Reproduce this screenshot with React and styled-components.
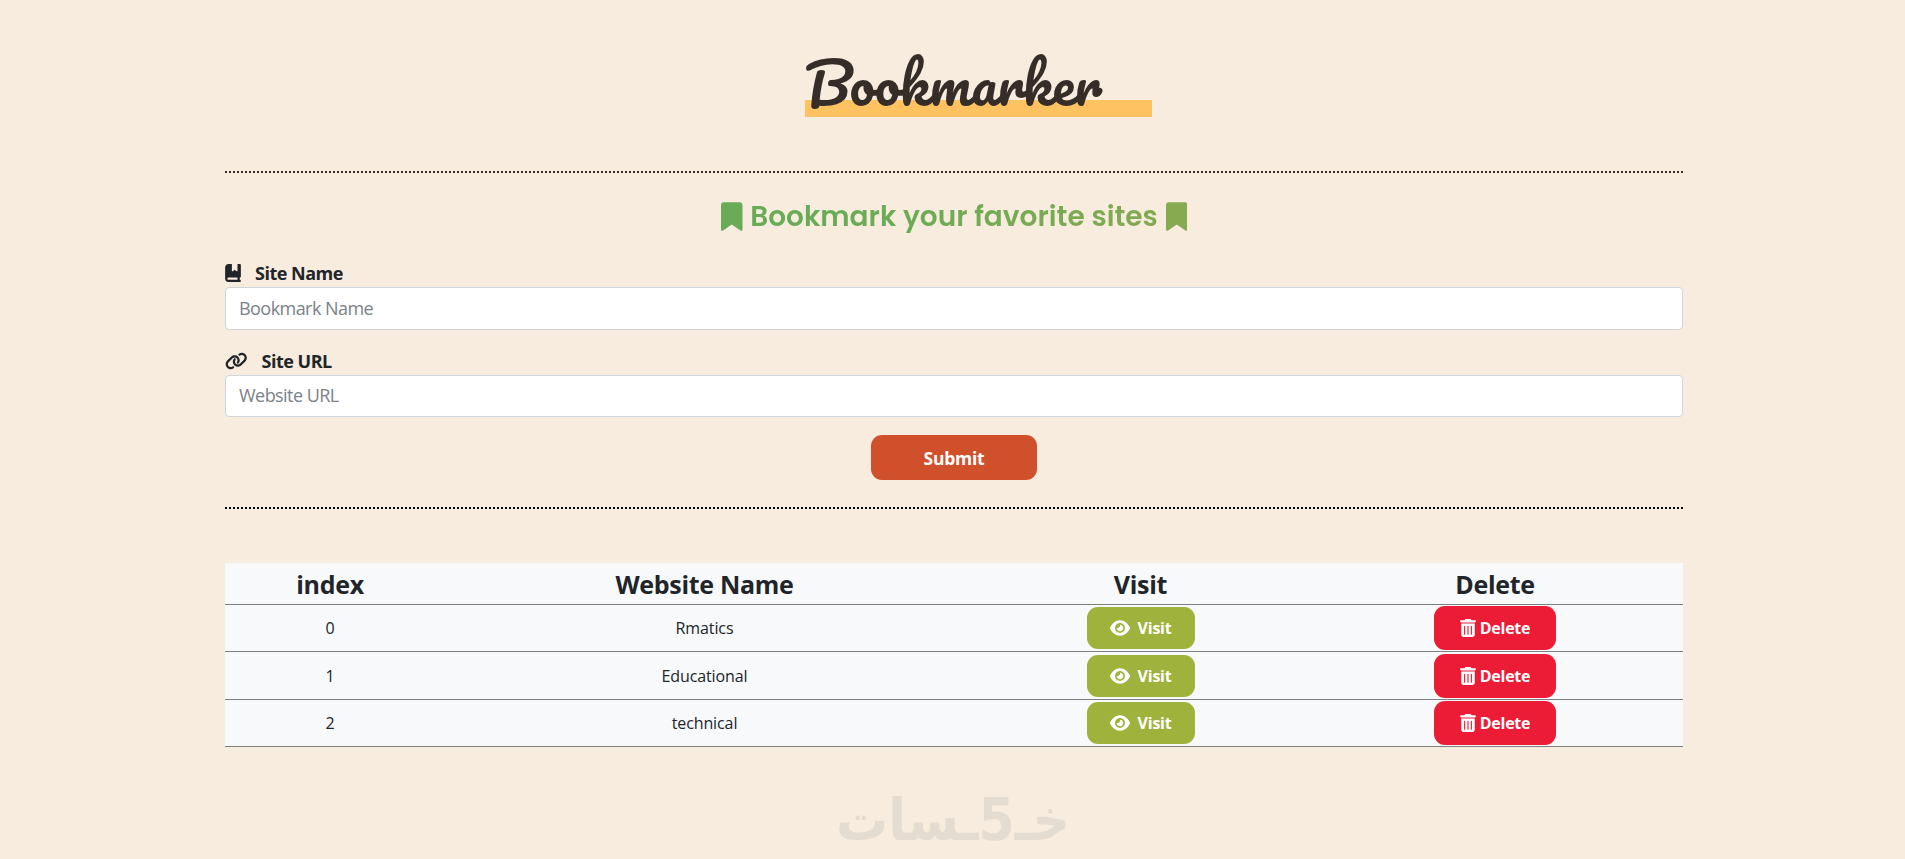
import styled, { createGlobalStyle } from "styled-components";
import {
  FaBookBookmark,
  FaBookmark,
  FaEye,
  FaLink,
  FaTrashCan,
} from "react-icons/fa6";

const GlobalStyle = createGlobalStyle`
  * {
    box-sizing: border-box;
  }
  body {
    margin: 0;
    height: 859px;
    overflow: hidden;
    background: #f8ecde;
    color: #212529;
    font-family: "Segoe UI", "Open Sans", "Noto Sans", sans-serif;
    font-size: 18px;
  }
`;

const Container = styled.main`
  width: 1458px;
  margin-left: 225px;
  display: flex;
  flex-direction: column;
  align-items: center;
`;

const Title = styled.h1`
  width: 347px;
  height: 71px;
  margin: 46px 0 54px 49px;
  background: linear-gradient(#ffc261, #ffc261) 0 54px / 100% 17px no-repeat;
  color: #362d29;
  font-family: Pacifico, cursive;
  font-size: 56px;
  font-weight: 400;
  line-height: 73px;
  white-space: nowrap;
`;

const Divider = styled.div`
  width: 100%;
  margin-top: ${(props) => props.$top || "0"};
  border-top: 2px dotted ${(props) => props.$color};
`;

const Icon = styled.span`
  flex-shrink: 0;
  color: ${(props) => props.$color || "inherit"};
  svg {
    display: block;
    width: ${(props) => props.$width};
    height: ${(props) => props.$height || "18px"};
  }
`;

const Heading = styled.h2`
  display: flex;
  align-items: center;
  justify-content: space-between;
  width: 466px;
  height: 42px;
  margin: 22px 0 23px;
  font-family: Poppins, Inter, sans-serif;
  font-size: 28px;
  font-weight: 600;
  white-space: nowrap;
`;

const HeadingText = styled.span`
  padding-top: 1px;
  background: linear-gradient(90deg, #69ab56 30%, #82aa51);
  background-clip: text;
  color: transparent;
`;

const Form = styled.form`
  width: 100%;
  display: flex;
  flex-direction: column;
  align-items: center;
`;

const Field = styled.label`
  width: 100%;
  margin-bottom: 18px;
  font-weight: 700;
`;

const FieldName = styled.div`
  display: flex;
  align-items: center;
  gap: 14px;
  height: 27px;
  padding-bottom: 1px;
  letter-spacing: -0.5px;
`;

const Input = styled.input`
  display: block;
  width: 100%;
  height: 42.5px;
  padding: 0 13px 1px;
  border: 1px solid #ced4da;
  border-radius: 4px;
  background: #fff;
  font: inherit;
  font-weight: 400;
  letter-spacing: -0.55px;
  &::placeholder {
    color: #7a8288;
    opacity: 1;
  }
`;

const Button = styled.button`
  display: inline-flex;
  align-items: center;
  justify-content: center;
  gap: ${(props) => props.$gap || "0"};
  width: ${(props) => props.$width};
  height: ${(props) => props.$height};
  padding: 0;
  border: 0;
  border-radius: 11px;
  background: ${(props) => props.$color};
  color: #fff;
  font-family: inherit;
  font-size: ${(props) => props.$size || "16px"};
  font-weight: 700;
  letter-spacing: -0.25px;
`;

const Table = styled.section`
  width: 100%;
  margin-top: 54px;
  background: #f8f9fb;
`;

const Row = styled.div`
  display: grid;
  grid-template-columns: 210px 539px 333px 376px;
  align-items: center;
  justify-items: center;
  height: ${(props) => props.$height};
  border-bottom: 1px solid #7d7f82;
  font-size: 16px;
  letter-spacing: -0.1px;
`;

const HeadRow = styled(Row)`
  padding-top: 1px;
  font-size: 25px;
  font-weight: 700;
  letter-spacing: -0.3px;
`;

const Watermark = styled.svg`
  display: block;
  margin: 38px 0 0 -2px;
  overflow: visible;
  fill: #e4dcd1;
  font-family: "DejaVu Sans", sans-serif;
  font-size: 58px;
  font-weight: 700;
`;

const sites = [
  { name: "Rmatics", height: "47px" },
  { name: "Educational", height: "48px" },
  { name: "technical", height: "47px" },
];

const SiteRow = ({ index, name, height }) => (
  <Row $height={height}>
    <span>{index}</span>
    <span>{name}</span>
    <Button $color="#9fb23b" $width="108px" $height="42px" $gap="8px">
      <Icon $width="20px">
        <FaEye />
      </Icon>
      Visit
    </Button>
    <Button $color="#ed1c36" $width="122px" $height="44px" $gap="4px">
      <Icon $width="16px">
        <FaTrashCan />
      </Icon>
      Delete
    </Button>
  </Row>
);

const App = () => {
  return (
    <>
      <GlobalStyle />
      <Container>
        <Title>Bookmarker</Title>
        <Divider $color="#362d29" />
        <Heading>
          <Icon $width="21.5px" $height="29px" $color="#69ab56">
            <FaBookmark />
          </Icon>
          <HeadingText>Bookmark your favorite sites</HeadingText>
          <Icon $width="21.5px" $height="29px" $color="#85aa50">
            <FaBookmark />
          </Icon>
        </Heading>
        <Form onSubmit={(e) => e.preventDefault()}>
          <Field>
            <FieldName>
              <Icon $width="16px">
                <FaBookBookmark />
              </Icon>
              Site Name
            </FieldName>
            <Input placeholder="Bookmark Name" />
          </Field>
          <Field>
            <FieldName>
              <Icon $width="22.5px">
                <FaLink />
              </Icon>
              Site URL
            </FieldName>
            <Input placeholder="Website URL" />
          </Field>
          <Button $color="#d1502c" $width="166px" $height="45px" $size="17.5px">
            Submit
          </Button>
        </Form>
        <Divider $color="#000" $top="27px" />
        <Table>
          <HeadRow $height="42px">
            <span>index</span>
            <span>Website Name</span>
            <span>Visit</span>
            <span>Delete</span>
          </HeadRow>
          {sites.map((site, index) => (
            <SiteRow key={site.name} index={index} {...site} />
          ))}
        </Table>
        <Watermark width="230" height="64" viewBox="0 0 230 64">
          <text
            x="115"
            y="55"
            textAnchor="middle"
            textLength="234"
            lengthAdjust="spacingAndGlyphs"
            direction="rtl"
          >
            خـ5ـسات
          </text>
        </Watermark>
      </Container>
    </>
  );
};

export default App;
